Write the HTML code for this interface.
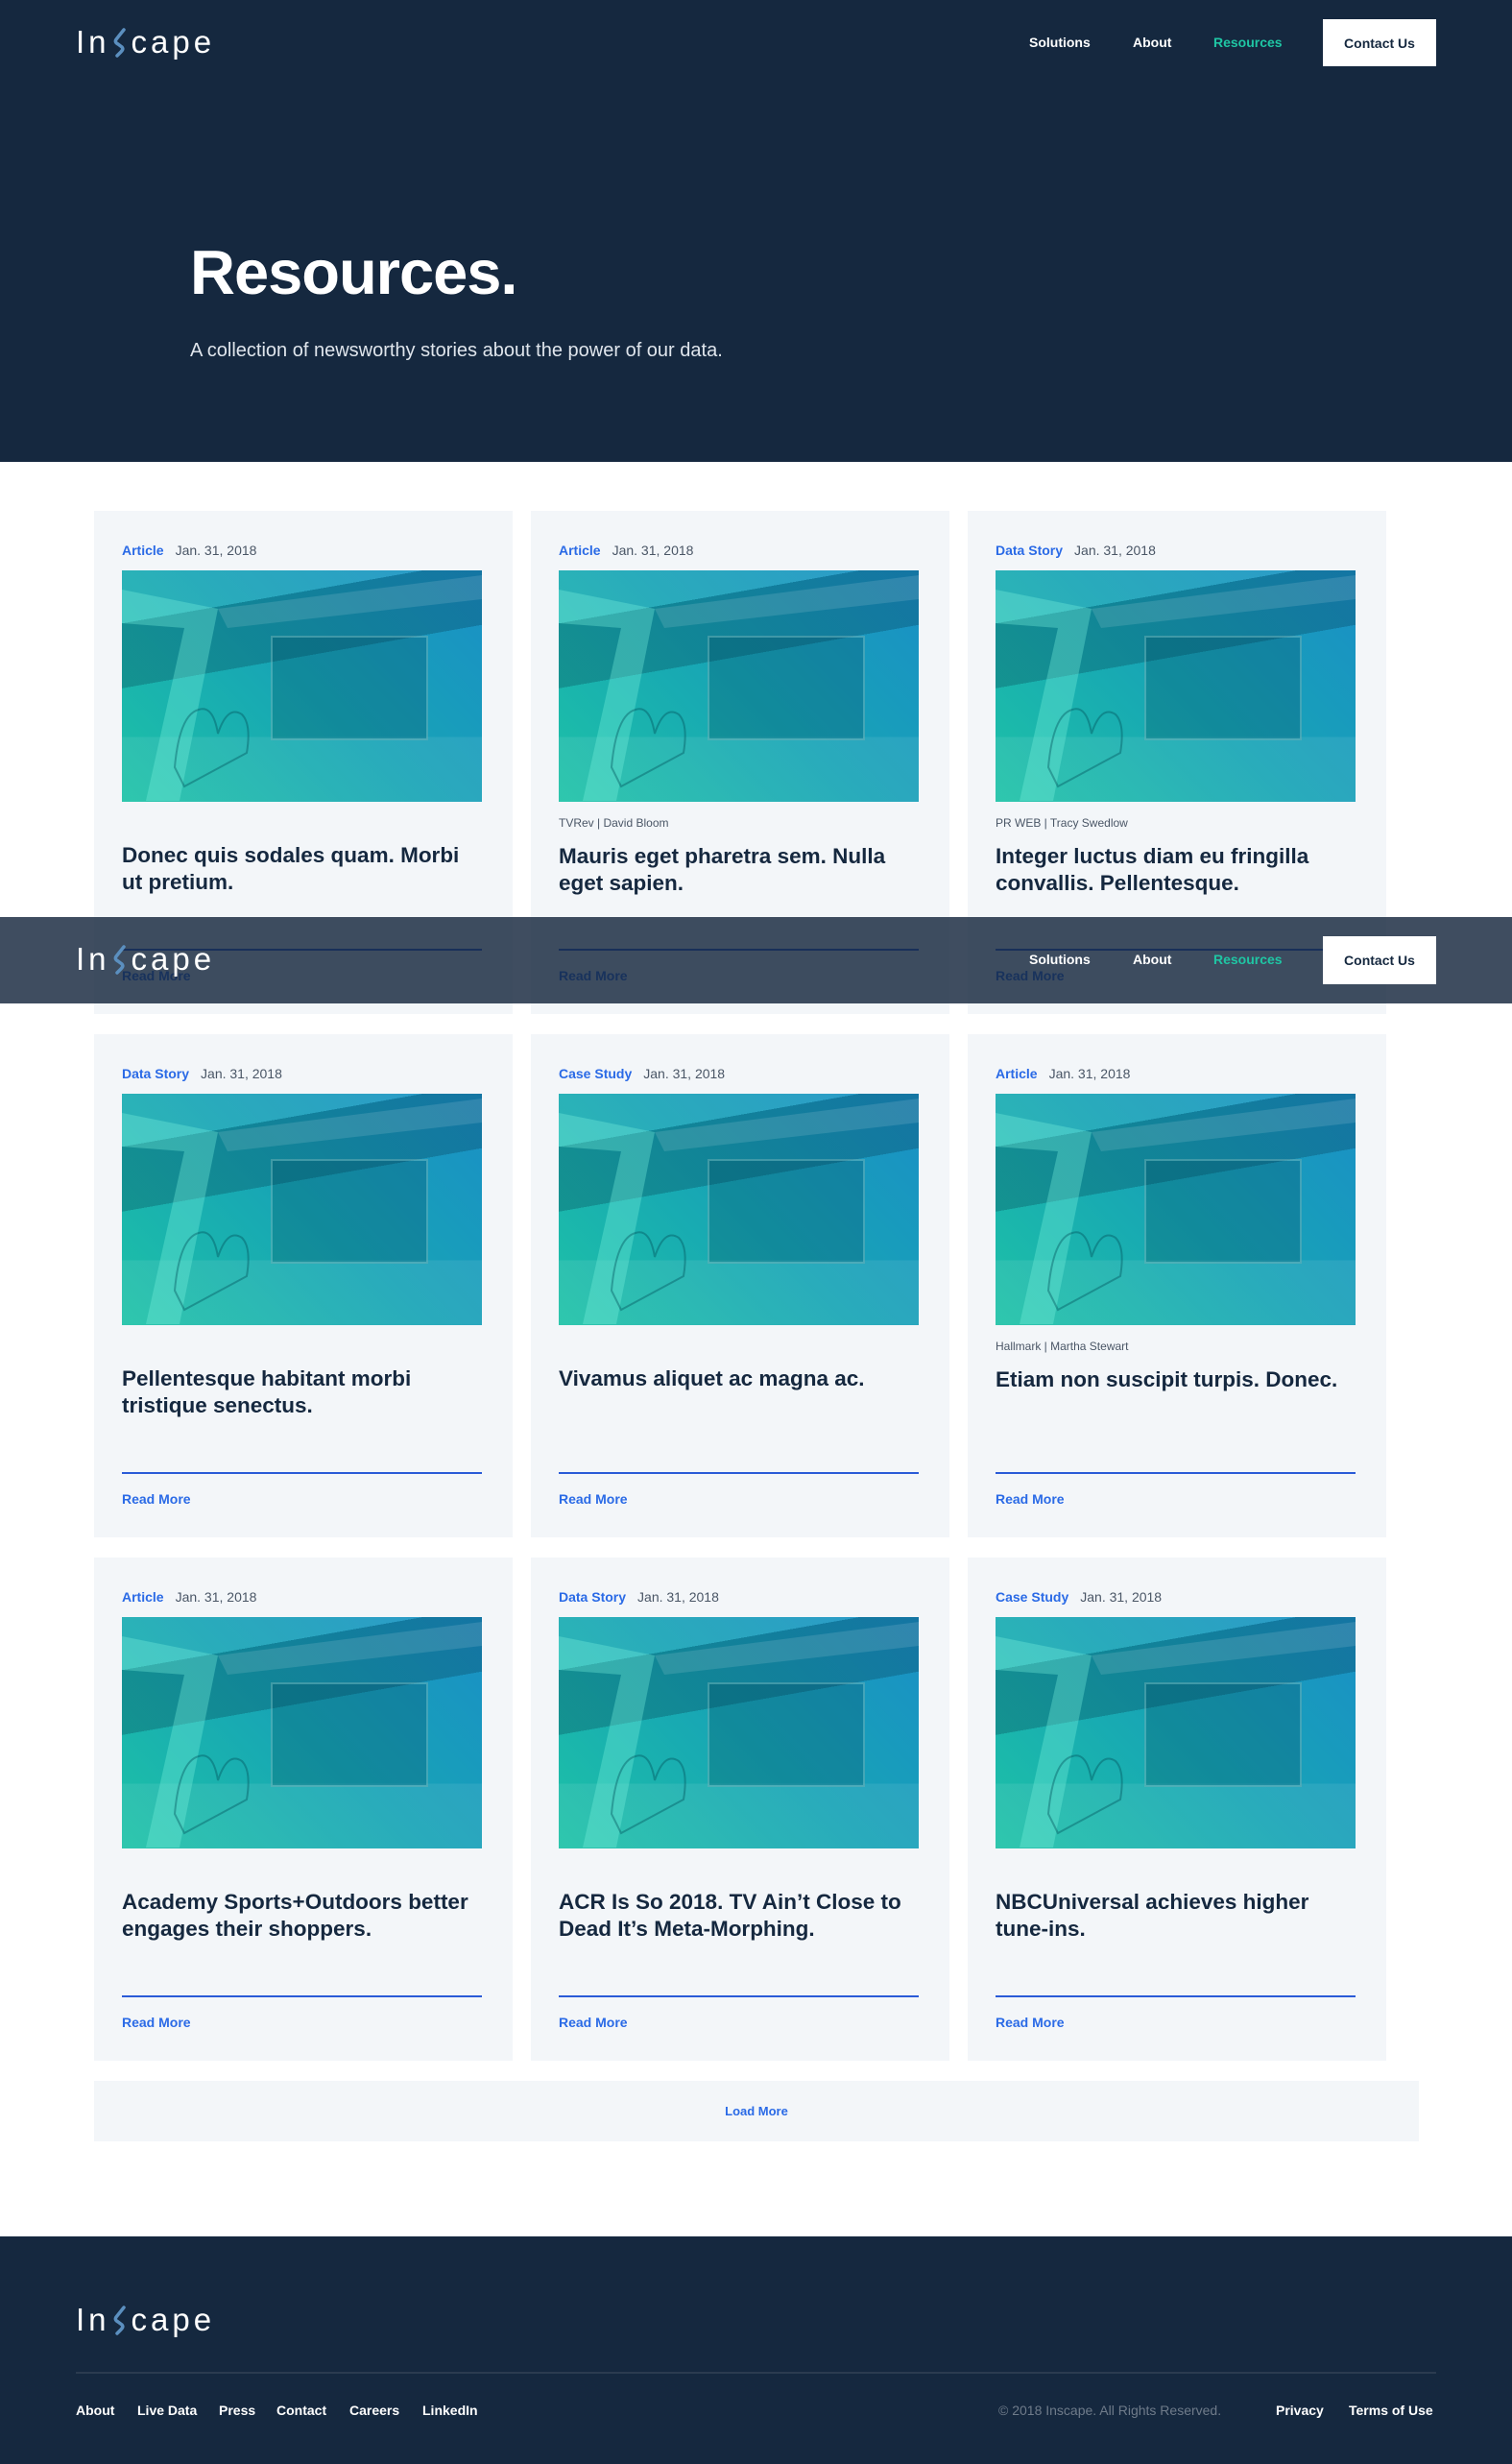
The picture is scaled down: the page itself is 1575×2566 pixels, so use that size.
<!DOCTYPE html>
<html><head><meta charset="utf-8"><style>
*{margin:0;padding:0;box-sizing:border-box}
body{width:1575px;height:2566px;position:relative;background:#fff;font-family:"Liberation Sans",sans-serif;overflow:hidden}
.dark{background:#15283f}
.logo{position:absolute;color:#fff;font-size:33px;letter-spacing:4px;display:flex;align-items:center;line-height:1}
.logo svg{margin:0 3px 0 1px}
.nav a{position:absolute;color:#fff;font-size:14px;font-weight:bold;text-decoration:none}
.btn{position:absolute;background:#fff;color:#15283f;font-size:14px;font-weight:bold;display:flex;align-items:center;justify-content:center}
.card{position:absolute;width:436px;height:524px;background:#f3f6f9}
.lab{position:absolute;left:29px;top:33px;font-size:14px;color:#2a6ae6;font-weight:bold}
.lab span{color:#4a5666;font-weight:normal;margin-left:12px}
.img{position:absolute;left:29px;top:62px;width:375px;height:241px;overflow:hidden;background:linear-gradient(45deg,#1dc2a6 0%,#17a5b5 50%,#1a8fc6 100%)}
.img::before{content:"";position:absolute;left:0;top:0;width:375px;height:241px;background:
linear-gradient(170deg,rgba(255,255,255,0.08) 0 18%,rgba(0,40,60,0.25) 18% 40%,transparent 40%),
linear-gradient(0deg,rgba(255,255,255,0.08) 0 28%,transparent 28%)}
.img::after{content:"";position:absolute;left:155px;top:68px;width:160px;height:105px;border:2px solid rgba(160,230,230,0.35);background:rgba(0,60,80,0.25)}
.seven{position:absolute;left:0;top:0;width:375px;height:241px}
.src{position:absolute;left:29px;top:318px;font-size:12px;color:#4a5666}
.t{position:absolute;left:29px;width:360px;font-size:22.5px;line-height:28px;font-weight:bold;color:#15283f}
.ln{position:absolute;left:29px;top:456px;width:375px;height:2px;background:#2a5bd7}
.rm{position:absolute;left:29px;top:476px;font-size:14px;font-weight:bold;color:#2a6ae6}
</style></head><body>
<svg width="0" height="0" style="position:absolute"><defs><g id="sv"><path d="M0 20 L100 40 L60 240 L25 240 L65 60 L0 55Z" fill="rgba(120,240,220,0.35)"/><path d="M55 205 Q60 150 80 145 Q95 140 100 170 Q110 140 125 150 Q135 160 130 190 L65 225Z" fill="none" stroke="rgba(0,80,90,0.4)" stroke-width="2"/><path d="M100 40 L375 5 L375 30 L110 60Z" fill="rgba(255,255,255,0.12)"/></g></defs></svg>
<div class="dark" style="position:absolute;left:0;top:0;width:1575px;height:481px"></div>
<div class="logo" style="left:79px;top:27px">In<svg width="18" height="32" viewBox="0 0 18 32"><path d="M13 3 L5 13 Q3 16 7 18 L11 21 Q13 23 10 26 L6 30" stroke="#5b8fbf" stroke-width="3.5" fill="none" stroke-linecap="round"/></svg>cape</div>
<div class="nav"><a style="left:1072px;top:36px">Solutions</a><a style="left:1180px;top:36px">About</a><a style="left:1264px;top:36px;color:#1fc6a4">Resources</a></div>
<div class="btn" style="left:1378px;top:20px;width:118px;height:49px">Contact Us</div>
<div style="position:absolute;left:198px;top:246px;color:#fff;font-size:65px;font-weight:bold;letter-spacing:-1px">Resources.</div>
<div style="position:absolute;left:198px;top:354px;color:#dfe5ec;font-size:20px">A collection of newsworthy stories about the power of our data.</div>

<div class="card" style="left:98px;top:532px"><div class="lab">Article<span>Jan. 31, 2018</span></div><div class="img"><svg class="seven"><use href="#sv"/></svg></div><div class="t" style="top:345px">Donec quis sodales quam. Morbi ut pretium.</div><div class="ln"></div><div class="rm">Read More</div></div>
<div class="card" style="left:553px;top:532px"><div class="lab">Article<span>Jan. 31, 2018</span></div><div class="img"><svg class="seven"><use href="#sv"/></svg></div><div class="src">TVRev | David Bloom</div><div class="t" style="top:346px">Mauris eget pharetra sem. Nulla eget sapien.</div><div class="ln"></div><div class="rm">Read More</div></div>
<div class="card" style="left:1008px;top:532px"><div class="lab">Data Story<span>Jan. 31, 2018</span></div><div class="img"><svg class="seven"><use href="#sv"/></svg></div><div class="src">PR WEB | Tracy Swedlow</div><div class="t" style="top:346px">Integer luctus diam eu fringilla convallis. Pellentesque.</div><div class="ln"></div><div class="rm">Read More</div></div>

<div class="card" style="left:98px;top:1077px"><div class="lab">Data Story<span>Jan. 31, 2018</span></div><div class="img"><svg class="seven"><use href="#sv"/></svg></div><div class="t" style="top:345px">Pellentesque habitant morbi tristique senectus.</div><div class="ln"></div><div class="rm">Read More</div></div>
<div class="card" style="left:553px;top:1077px"><div class="lab">Case Study<span>Jan. 31, 2018</span></div><div class="img"><svg class="seven"><use href="#sv"/></svg></div><div class="t" style="top:345px">Vivamus aliquet ac magna ac.</div><div class="ln"></div><div class="rm">Read More</div></div>
<div class="card" style="left:1008px;top:1077px"><div class="lab">Article<span>Jan. 31, 2018</span></div><div class="img"><svg class="seven"><use href="#sv"/></svg></div><div class="src">Hallmark | Martha Stewart</div><div class="t" style="top:346px">Etiam non suscipit turpis. Donec.</div><div class="ln"></div><div class="rm">Read More</div></div>

<div class="card" style="left:98px;top:1622px"><div class="lab">Article<span>Jan. 31, 2018</span></div><div class="img"><svg class="seven"><use href="#sv"/></svg></div><div class="t" style="top:345px;width:380px">Academy Sports+Outdoors better engages their shoppers.</div><div class="ln"></div><div class="rm">Read More</div></div>
<div class="card" style="left:553px;top:1622px"><div class="lab">Data Story<span>Jan. 31, 2018</span></div><div class="img"><svg class="seven"><use href="#sv"/></svg></div><div class="t" style="top:345px">ACR Is So 2018. TV Ain’t Close to Dead It’s Meta-Morphing.</div><div class="ln"></div><div class="rm">Read More</div></div>
<div class="card" style="left:1008px;top:1622px"><div class="lab">Case Study<span>Jan. 31, 2018</span></div><div class="img"><svg class="seven"><use href="#sv"/></svg></div><div class="t" style="top:345px">NBCUniversal achieves higher tune-ins.</div><div class="ln"></div><div class="rm">Read More</div></div>

<div style="position:absolute;left:98px;top:2167px;width:1380px;height:63px;background:#f3f6f9;display:flex;align-items:center;justify-content:center;color:#2a6ae6;font-size:13px;font-weight:bold">Load More</div>

<div style="position:absolute;left:0;top:955px;width:1575px;height:90px;background:rgba(21,38,61,0.82)"></div>
<div class="logo" style="left:79px;top:982px">In<svg width="18" height="32" viewBox="0 0 18 32"><path d="M13 3 L5 13 Q3 16 7 18 L11 21 Q13 23 10 26 L6 30" stroke="#5b8fbf" stroke-width="3.5" fill="none" stroke-linecap="round"/></svg>cape</div>
<div class="nav"><a style="left:1072px;top:991px">Solutions</a><a style="left:1180px;top:991px">About</a><a style="left:1264px;top:991px;color:#1fc6a4">Resources</a></div>
<div class="btn" style="left:1378px;top:975px;width:118px;height:50px">Contact Us</div>

<div class="dark" style="position:absolute;left:0;top:2329px;width:1575px;height:237px"></div>
<div class="logo" style="left:79px;top:2399px">In<svg width="18" height="32" viewBox="0 0 18 32"><path d="M13 3 L5 13 Q3 16 7 18 L11 21 Q13 23 10 26 L6 30" stroke="#5b8fbf" stroke-width="3.5" fill="none" stroke-linecap="round"/></svg>cape</div>
<div style="position:absolute;left:79px;top:2470px;width:1417px;height:2px;background:#2b3b50"></div>
<div class="nav" style="font-size:14px"><a style="left:79px;top:2502px">About</a><a style="left:143px;top:2502px">Live Data</a><a style="left:228px;top:2502px">Press</a><a style="left:288px;top:2502px">Contact</a><a style="left:364px;top:2502px">Careers</a><a style="left:440px;top:2502px">LinkedIn</a>
<a style="left:1040px;top:2502px;color:#6f7b8a;font-weight:normal">© 2018 Inscape. All Rights Reserved.</a><a style="left:1329px;top:2502px">Privacy</a><a style="left:1405px;top:2502px">Terms of Use</a></div>
</body></html>
